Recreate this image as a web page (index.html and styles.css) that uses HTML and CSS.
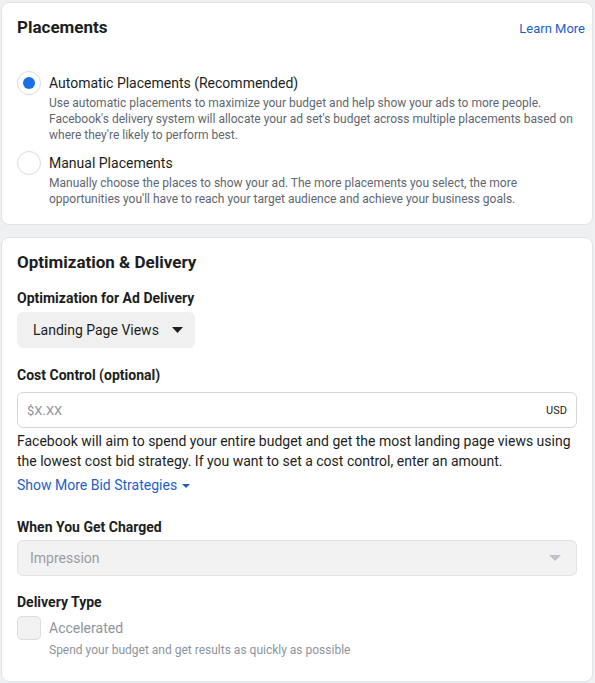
FILE: index.html
```html
<!DOCTYPE html>
<html lang="en">
<head>
<meta charset="utf-8">
<title>Placements</title>
<link rel="stylesheet" href="styles.css">
</head>
<body>
<div class="page">
  <section class="card">
    <div class="card-head">
      <h2 class="card-title">Placements</h2>
      <a class="link learn" href="#">Learn More</a>
    </div>
    <div class="options">
      <div class="option">
        <span class="radio checked"><span class="dot"></span></span>
        <div class="option-text">
          <div class="option-label">Automatic Placements (Recommended)</div>
          <p class="option-desc">Use automatic placements to maximize your budget and help show your ads to more people. Facebook's delivery system will allocate your ad set's budget across multiple placements based on where they're likely to perform best.</p>
        </div>
      </div>
      <div class="option">
        <span class="radio"></span>
        <div class="option-text">
          <div class="option-label">Manual Placements</div>
          <p class="option-desc">Manually choose the places to show your ad. The more placements you select, the more opportunities you'll have to reach your target audience and achieve your business goals.</p>
        </div>
      </div>
    </div>
  </section>

  <section class="card card-2">
    <h2 class="card-title">Optimization &amp; Delivery</h2>

    <div class="field first">
      <div class="field-label">Optimization for Ad Delivery</div>
      <button class="dropdown" type="button">Landing Page Views
        <svg class="caret" width="11" height="6" viewBox="0 0 11 6"><path d="M0 0h11L5.5 6z" fill="#1c1e21"/></svg>
      </button>
    </div>

    <div class="field cost">
      <div class="field-label">Cost Control (optional)</div>
      <div class="input">
        <span class="placeholder">$X.XX</span>
        <span class="currency">USD</span>
      </div>
      <p class="help">Facebook will aim to spend your entire budget and get the most landing page views using the lowest cost bid strategy. If you want to set a cost control, enter an amount.</p>
      <a class="link more" href="#">Show More Bid Strategies
        <svg class="small-caret" width="8" height="4" viewBox="0 0 8 4"><path d="M0 0h8L4 4z" fill="#1d5fc9"/></svg>
      </a>
    </div>

    <div class="field charged">
      <div class="field-label tight">When You Get Charged</div>
      <div class="select disabled">
        <span>Impression</span>
        <svg width="12" height="6" viewBox="0 0 12 6"><path d="M0 0h12L6 6z" fill="#bec3c9"/></svg>
      </div>
    </div>

    <div class="field">
      <div class="field-label">Delivery Type</div>
      <div class="check-row">
        <span class="checkbox"></span>
        <div class="option-text">
          <div class="check-label">Accelerated</div>
          <p class="check-desc">Spend your budget and get results as quickly as possible</p>
        </div>
      </div>
    </div>
  </section>
</div>
</body>
</html>
```

FILE: styles.css
```css
* { box-sizing: border-box; }

html, body {
  margin: 0;
  padding: 0;
  background: #eff0f1;
  font-family: Roboto, "Helvetica Neue", Arial, sans-serif;
  color: #1c1e21;
}

.page {
  padding: 2px 2px 0 1px;
  display: flex;
  flex-direction: column;
  gap: 12px;
}

.card {
  background: #fff;
  border: 1px solid #e2e3e5;
  border-radius: 8px;
  padding: 14px 15px 17px;
}

.card-head {
  display: flex;
  justify-content: space-between;
  align-items: flex-start;
}

.card-title {
  margin: 0;
  font-size: 17px;
  line-height: 20px;
  font-weight: 700;
  color: #1c1e21;
}

.link {
  color: #1d5fc9;
  text-decoration: none;
  font-size: 14px;
  line-height: 20px;
}

.learn {
  font-size: 13px;
  margin-right: -8px;
  margin-top: 2px;
}

.options {
  margin-top: 32px;
  display: flex;
  flex-direction: column;
  gap: 8px;
}

.option {
  display: flex;
  gap: 8px;
}

.radio {
  flex: none;
  width: 24px;
  height: 24px;
  border: 1px solid #d8dadd;
  border-radius: 50%;
  display: flex;
  align-items: center;
  justify-content: center;
  background: #fff;
}

.radio .dot {
  width: 12px;
  height: 12px;
  border-radius: 50%;
  background: #1a6fe8;
}

.option-label {
  font-size: 14px;
  line-height: 24px;
  color: #1c1e21;
}

.option-desc {
  margin: 0;
  font-size: 12px;
  line-height: 16px;
  color: #606770;
}

.card-2 {
  padding-bottom: 23px;
}

.field {
  margin-top: 16px;
}

.field.first {
  margin-top: 16px;
}

.field.cost {
  margin-top: 17px;
}

.field.charged {
  margin-top: 22px;
}

.field-label {
  font-size: 14px;
  line-height: 20px;
  font-weight: 700;
  color: #1c1e21;
  margin-bottom: 4px;
}

.field-label.tight {
  margin-bottom: 3px;
}

.dropdown {
  display: inline-flex;
  align-items: center;
  gap: 13px;
  height: 36px;
  padding: 0 12px 0 16px;
  border: none;
  border-radius: 6px;
  background: #f0f0f0;
  font-family: inherit;
  font-size: 14px;
  color: #1c1e21;
  cursor: pointer;
}

.input {
  margin-top: 7px;
  height: 36px;
  border: 1px solid #d4d6d9;
  border-radius: 6px;
  display: flex;
  align-items: center;
  justify-content: space-between;
  padding: 0 9px 0 9px;
}

.placeholder {
  font-size: 13px;
  color: #8d949e;
}

.currency {
  font-size: 11px;
  color: #1c1e21;
}

.help {
  margin: 3px 0 0;
  font-size: 14px;
  line-height: 20px;
  color: #1c1e21;
}

.more {
  display: inline-flex;
  align-items: center;
  gap: 5px;
  margin-top: 4px;
}

.small-caret { margin-top: 1px; }

.select {
  height: 36px;
  border: 1px solid #e2e3e5;
  border-radius: 6px;
  background: #f2f2f2;
  display: flex;
  align-items: center;
  justify-content: space-between;
  padding: 0 15px 0 12px;
  font-size: 14px;
  color: #999da3;
}

.check-row {
  display: flex;
  gap: 8px;
}

.checkbox {
  flex: none;
  width: 24px;
  height: 24px;
  border: 1px solid #dcdde0;
  border-radius: 5px;
  background: #f2f2f2;
}

.check-label {
  font-size: 14px;
  line-height: 24px;
  color: #8d949e;
}

.check-desc {
  margin: 2px 0 0;
  font-size: 12px;
  line-height: 16px;
  color: #8d949e;
}
```
